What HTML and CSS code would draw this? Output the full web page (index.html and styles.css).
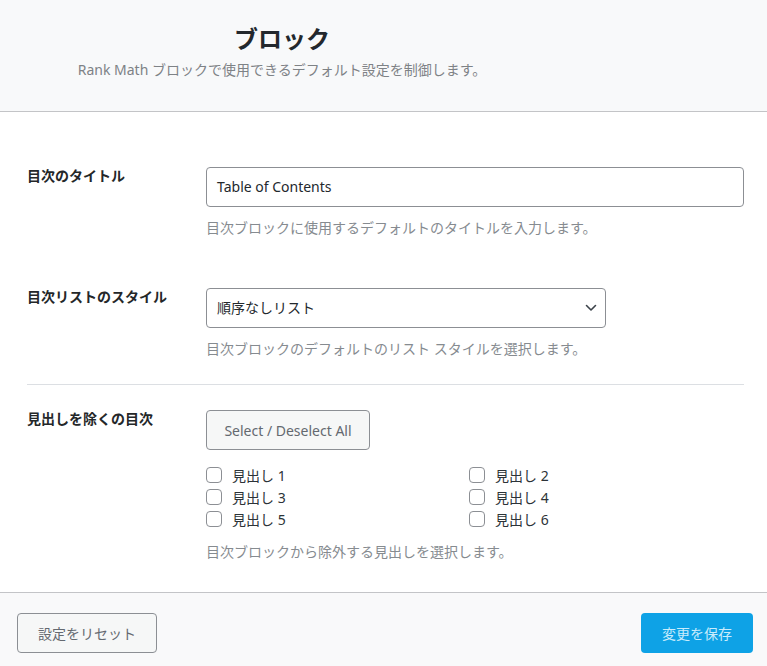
FILE: index.html
```html
<!DOCTYPE html>
<html lang="ja">
<head>
<meta charset="utf-8">
<title>ブロック</title>
<link rel="stylesheet" href="styles.css">
</head>
<body>
<div class="page">
  <header class="head">
    <div class="head-inner">
      <h1 class="title">ブロック</h1>
      <p class="subtitle">Rank Math ブロックで使用できるデフォルト設定を制御します。</p>
    </div>
  </header>

  <main class="main">
    <div class="row">
      <div class="label">目次のタイトル</div>
      <div class="field">
        <div class="input">Table of Contents</div>
        <p class="desc">目次ブロックに使用するデフォルトのタイトルを入力します。</p>
      </div>
    </div>

    <div class="row row-2">
      <div class="label">目次リストのスタイル</div>
      <div class="field">
        <div class="select">
          <span>順序なしリスト</span>
          <svg class="chev" width="12" height="8" viewBox="0 0 12 8"><path d="M1.5 1.5 L6 6 L10.5 1.5" fill="none" stroke="#3c434a" stroke-width="1.6" stroke-linecap="round" stroke-linejoin="round"/></svg>
        </div>
        <p class="desc">目次ブロックのデフォルトのリスト スタイルを選択します。</p>
      </div>
    </div>

    <hr class="sep">

    <div class="row row-3">
      <div class="label">見出しを除くの目次</div>
      <div class="field">
        <div class="btn-select">Select / Deselect All</div>
        <div class="checks">
          <label class="check"><span class="box"></span>見出し 1</label>
          <label class="check"><span class="box"></span>見出し 2</label>
          <label class="check"><span class="box"></span>見出し 3</label>
          <label class="check"><span class="box"></span>見出し 4</label>
          <label class="check"><span class="box"></span>見出し 5</label>
          <label class="check"><span class="box"></span>見出し 6</label>
        </div>
        <p class="desc desc-last">目次ブロックから除外する見出しを選択します。</p>
      </div>
    </div>
  </main>

  <footer class="foot">
    <div class="btn-reset">設定をリセット</div>
    <div class="btn-save">変更を保存</div>
  </footer>
</div>
</body>
</html>
```

FILE: styles.css
```css
* { box-sizing: border-box; }
html, body { margin: 0; padding: 0; }
body {
  font-family: "Noto Sans", "Noto Sans CJK JP", sans-serif;
  font-size: 14px;
  color: #23282d;
  background: #fff;
}
.page { width: 767px; min-height: 666px; display: flex; flex-direction: column; }

.head {
  background: #f8f9fa;
  border-bottom: 1px solid #c3c4c7;
  height: 112px;
  padding-top: 21px;
}
.head-inner { width: 564px; text-align: center; }
.title {
  margin: 0;
  font-size: 24px;
  font-weight: 700;
  line-height: 36px;
  color: #23282d;
}
.subtitle {
  margin: 3px 0 0 0;
  font-size: 14px;
  line-height: 20px;
  color: #7e8286;
}

.main {
  background: #fff;
  padding: 55px 23px 30px 27px;
  border-bottom: 1px solid #c3c4c7;
}
.row { display: grid; grid-template-columns: 179px 1fr; }
.row-2 { margin-top: 50px; }
.label {
  font-weight: 700;
  line-height: 18px;
  color: #242729;
}
.input, .select {
  height: 40px;
  border: 1px solid #8c8f94;
  border-radius: 4px;
  padding: 0 10px;
  display: flex;
  align-items: center;
  line-height: 20px;
  color: #23282d;
  background: #fff;
}
.select { width: 400px; justify-content: space-between; padding-right: 8px; }
.chev { display: block; }
.desc {
  margin: 11px 0 0 0;
  line-height: 20px;
  color: #868b90;
}
.desc-last { margin-top: 12px; }

.sep {
  border: 0;
  border-top: 1px solid #dcdfe3;
  margin: 25px 0 25px 0;
  height: 0;
}

.btn-select {
  width: 164px;
  height: 40px;
  border: 1px solid #8c8f94;
  border-radius: 4px;
  background: #f6f7f7;
  color: #646970;
  display: flex;
  align-items: center;
  justify-content: center;
}
.checks {
  margin-top: 14px;
  display: grid;
  grid-template-columns: 263px 263px;
}
.check {
  height: 22px;
  display: flex;
  align-items: center;
  color: #2c3338;
}
.box {
  width: 16px;
  height: 16px;
  border: 1px solid #8c8f94;
  border-radius: 4px;
  background: #fff;
  margin-right: 10px;
}

.foot {
  flex: 1;
  background: #f9f9fa;
  padding: 20px 14px 0 17px;
  display: flex;
  justify-content: space-between;
  align-items: flex-start;
}
.btn-reset {
  width: 140px;
  height: 40px;
  border: 1px solid #8c8f94;
  border-radius: 4px;
  background: #f6f7f7;
  color: #646970;
  display: flex;
  align-items: center;
  justify-content: center;
}
.btn-save {
  width: 112px;
  height: 40px;
  border-radius: 4px;
  background: #0ea2e6;
  color: #c9ecfc;
  display: flex;
  align-items: center;
  justify-content: center;
}
```
